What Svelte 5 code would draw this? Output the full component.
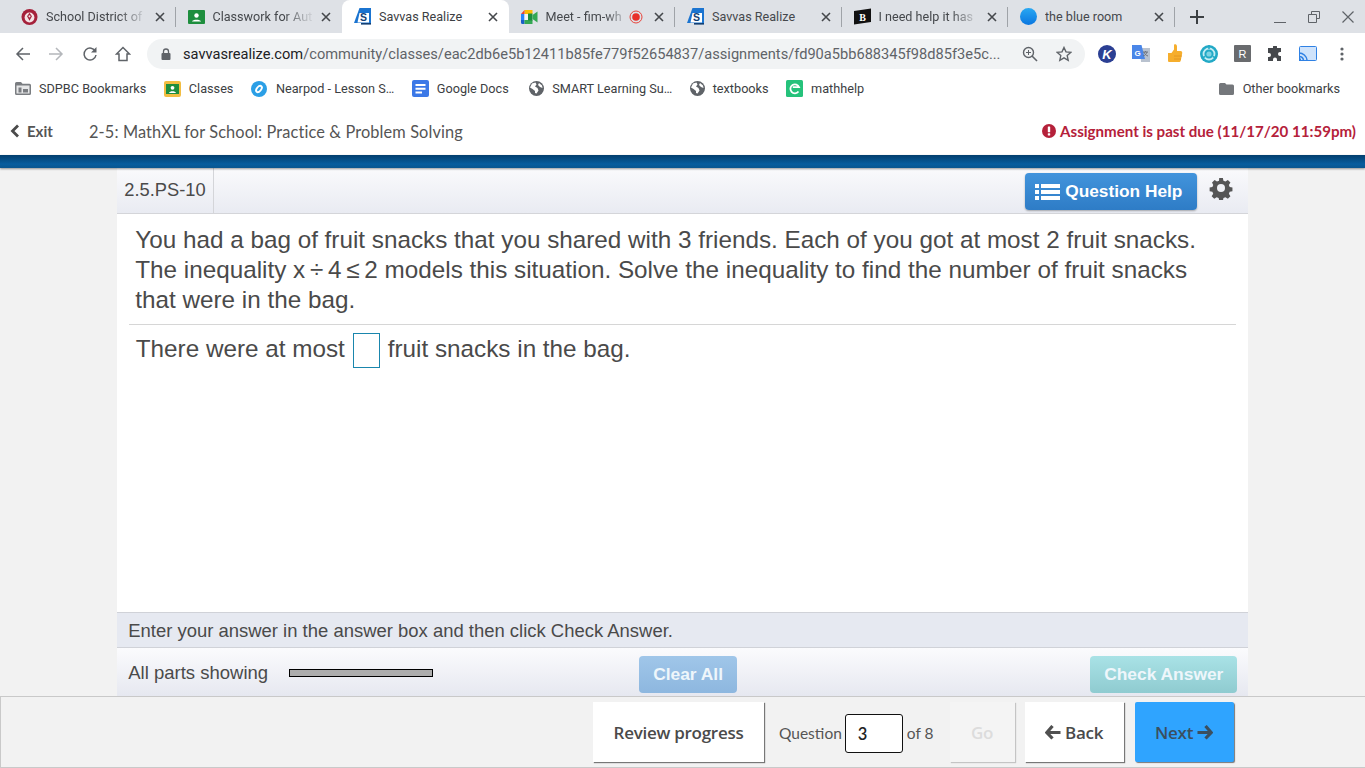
<script>
  const tabs = [
    { title: 'School District of', icon: 'district', fade: true },
    { title: 'Classwork for Aut', icon: 'classroom', fade: true },
    { title: 'Savvas Realize', icon: 'savvas', active: true },
    { title: 'Meet - fim-wh', icon: 'meet', recording: true, fade: true },
    { title: 'Savvas Realize', icon: 'savvas' },
    { title: 'I need help it has', icon: 'brainly', fade: true },
    { title: 'the blue room', icon: 'blue' }
  ];

  const bookmarks = [
    { label: 'SDPBC Bookmarks', icon: 'managed' },
    { label: 'Classes', icon: 'classes' },
    { label: 'Nearpod - Lesson S…', icon: 'nearpod' },
    { label: 'Google Docs', icon: 'docs' },
    { label: 'SMART Learning Su…', icon: 'globe' },
    { label: 'textbooks', icon: 'globe' },
    { label: 'mathhelp', icon: 'mathhelp' }
  ];
</script>

{#snippet favicon(kind)}
  {#if kind === 'district'}
    <svg width="18" height="18" viewBox="0 0 18 18"><circle cx="9" cy="9" r="8.500" fill="#a5213b" /><circle cx="9" cy="9.500" r="5.200" fill="#f4e4e6" /><path d="M9 4.500l2.600 3.600L9 13 6.400 8.100z" fill="#a5213b" /><circle cx="9" cy="8.300" r="1.100" fill="#f4e4e6" /></svg>
  {:else if kind === 'classroom'}
    <svg width="17" height="14" viewBox="0 0 17 14"><rect width="17" height="14" rx="1" fill="#1e8e3e" /><circle cx="8.500" cy="5.500" r="2.200" fill="#fff" /><path d="M4 11.500c.5-2.500 8.500-2.500 9 0z" fill="#fff" /></svg>
  {:else if kind === 'savvas'}
    <svg width="17" height="17" viewBox="0 0 17 17"><path d="M5.500 0H17v15H0z" fill="#1b74d0" /><path d="M5.500 5H15v9.500H3.500z" fill="#fff" /><text x="9.500" y="13" font-size="10.500" font-weight="700" font-family="Liberation Sans" text-anchor="middle" fill="#123f74">S</text><rect x="7" y="15" width="10" height="1.600" fill="#123f74" /></svg>
  {:else if kind === 'meet'}
    <svg width="17" height="14" viewBox="0 0 17 14"><path d="M3.500 0h8v4h-8z" fill="#fbbc04" /><path d="M3.500 0v4H0z" fill="#ea4335" /><path d="M0 4h3.500v6H0z" fill="#2684fc" /><path d="M0 10h3.500v4H1.500A1.500 1.500 0 0 1 0 12.500z" fill="#1a5fc8" /><path d="M3.500 10h8v4h-8z" fill="#34a853" /><path d="M3.500 4h8v6h-8z" fill="#f4f4f4" /><path d="M7 3.500h4.500v7H7z" fill="#1e8e3e" /><path d="M11.500 5l5-3.500v11l-5-3.500z" fill="#34a853" /></svg>
  {:else if kind === 'brainly'}
    <svg width="17" height="17" viewBox="0 0 17 17"><path d="M0 3l17-2.500V14L0 16.500z" fill="#111" /><text x="8.500" y="12.500" font-size="10" font-weight="700" font-family="Liberation Serif" text-anchor="middle" fill="#fff">B</text></svg>
  {:else if kind === 'blue'}
    <svg width="17" height="17" viewBox="0 0 17 17"><defs><linearGradient id="bluefav" x1="0" y1="0" x2="0" y2="1"><stop offset="0" stop-color="#29a8f2" /><stop offset="1" stop-color="#0a76e0" /></linearGradient></defs><circle cx="8.500" cy="8.500" r="8.500" fill="url(#bluefav)" /></svg>
  {/if}
{/snippet}

{#snippet bookmarkIcon(kind)}
  {#if kind === 'managed'}
    <svg width="16" height="13" viewBox="0 0 16 13"><path d="M1.500 0H6l1.500 1.800h7A1.500 1.500 0 0 1 16 3.300V11.500A1.500 1.500 0 0 1 14.500 13h-13A1.500 1.500 0 0 1 0 11.500V1.500A1.500 1.500 0 0 1 1.500 0z" fill="#7a7d81" /><rect x="1.500" y="3.500" width="13" height="8" fill="#e6e7e8" /><rect x="3.500" y="5.500" width="3" height="5" fill="#7a7d81" /><rect x="8" y="7" width="5" height="3.500" fill="#7a7d81" /></svg>
  {:else if kind === 'classes'}
    <svg width="17" height="16" viewBox="0 0 17 16"><rect width="17" height="16" rx="2" fill="#f2bd42" /><rect x="2" y="3" width="13" height="10" fill="#1e8e3e" /><circle cx="8.500" cy="6.800" r="1.900" fill="#fff" /><path d="M5 12c.5-2.300 6.500-2.300 7 0z" fill="#fff" /></svg>
  {:else if kind === 'nearpod'}
    <svg width="16" height="16" viewBox="0 0 16 16"><circle cx="8" cy="8" r="8" fill="#2b9fe6" /><ellipse cx="8" cy="8" rx="3" ry="4.600" transform="rotate(40 8 8)" fill="#fff" /><ellipse cx="8" cy="8" rx="1.300" ry="2.600" transform="rotate(40 8 8)" fill="#2b9fe6" /></svg>
  {:else if kind === 'docs'}
    <svg width="17" height="17" viewBox="0 0 17 17"><rect width="17" height="17" rx="2" fill="#3b78e7" /><path d="M3.500 4h10v2h-10zM3.500 7.700h10v2h-10zM3.500 11.400h6.500v2H3.500z" fill="#fff" /></svg>
  {:else if kind === 'globe'}
    <svg width="15" height="15" viewBox="0 0 15 15"><circle cx="7.500" cy="7.500" r="7.500" fill="#5f6368" /><path d="M3 2.500l3.500-1 1 2-1.500 2 2.500 1.500 1 2.500-2 3-1.500-.5V10L3.500 8 1 6.500zM10 2l3 2.500.5 2.500-2.500-1L9 4z" fill="#fff" /></svg>
  {:else if kind === 'mathhelp'}
    <svg width="17" height="17" viewBox="0 0 17 17"><rect width="17" height="17" rx="1.500" fill="#25c27b" /><path d="M12.500 11.500a4.500 4.500 0 1 1 .6-4.300H6.800" fill="none" stroke="#fff" stroke-width="1.800" /></svg>
  {/if}
{/snippet}

<div class="page">
  <header class="chrome">
    <div class="tabstrip">
      {#each tabs as tab}
        <div class="tab" class:active={tab.active}>
          <span class="favicon">{@render favicon(tab.icon)}</span>
          <span class="tab-title" class:fade={tab.fade}>{tab.title}</span>
          {#if tab.recording}
            <svg class="rec" width="14" height="14" viewBox="0 0 14 14"><circle cx="7" cy="7" r="6" fill="none" stroke="#e8453c" stroke-width="1" /><circle cx="7" cy="7" r="3.800" fill="#e8302a" /></svg>
          {/if}
          <svg class="tab-close" width="10" height="10" viewBox="0 0 10 10"><path d="M1 1l8 8M9 1l-8 8" stroke="#45484c" stroke-width="1.600" /></svg>
        </div>
      {/each}
      <svg class="new-tab" width="14" height="14" viewBox="0 0 14 14"><path d="M7 0v14M0 7h14" stroke="#3c4043" stroke-width="2" /></svg>
      <div class="window-controls">
        <svg width="12" height="12" viewBox="0 0 12 12"><path d="M0 11.500h12" stroke="#5f6368" stroke-width="1" /></svg>
        <svg width="12" height="12" viewBox="0 0 12 12"><path d="M3.500 3V.5h8v7H9M.5 3.500h8v8h-8z" fill="none" stroke="#5f6368" stroke-width="1" /></svg>
        <svg width="12" height="12" viewBox="0 0 12 12"><path d="M.5.500l11 11M11.500.500l-11 11" stroke="#5f6368" stroke-width="1.200" /></svg>
      </div>
    </div>

    <div class="toolbar">
      <svg class="nav" width="16" height="16" viewBox="0 0 16 16"><path d="M15 8H2M8 2L2 8l6 6" fill="none" stroke="#5f6368" stroke-width="1.500" /></svg>
      <svg class="nav" width="16" height="16" viewBox="0 0 16 16"><path d="M1 8h13M8 2l6 6-6 6" fill="none" stroke="#b4b7bb" stroke-width="1.500" /></svg>
      <svg class="nav" width="16" height="16" viewBox="0 0 16 16"><path d="M13.500 5.500A6 6 0 1 0 14 9" fill="none" stroke="#5f6368" stroke-width="1.500" /><path d="M14.500 1v5.500H9z" fill="#5f6368" /></svg>
      <svg class="nav" width="16" height="16" viewBox="0 0 16 16"><path d="M8 1.500L1.500 8H4v6.500h8V8h2.500z" fill="none" stroke="#5f6368" stroke-width="1.500" /></svg>
      <div class="omnibox">
        <svg width="10" height="12" viewBox="0 0 10 12"><path d="M2.500 5V3.500a2.500 2.500 0 0 1 5 0V5" fill="none" stroke="#5f6368" stroke-width="1.300" /><rect x="0.500" y="5" width="9" height="7" rx="1" fill="#5f6368" /></svg>
        <span class="url"><b>savvasrealize.com</b>/community/classes/eac2db6e5b12411b85fe779f52654837/assignments/fd90a5bb688345f98d85f3e5c...</span>
        <svg class="omni-icon" width="16" height="16" viewBox="0 0 16 16"><circle cx="6.500" cy="6.500" r="5" fill="none" stroke="#5f6368" stroke-width="1.400" /><path d="M10 10l5 5" stroke="#5f6368" stroke-width="1.600" /><path d="M4 6.500h5M6.500 4v5" stroke="#5f6368" stroke-width="1" /></svg>
        <svg class="omni-icon" width="16" height="16" viewBox="0 0 16 16"><path d="M8 1.500l2 4.400 4.800.5-3.600 3.200 1 4.700L8 11.900l-4.200 2.400 1-4.700L1.200 6.400 6 5.900z" fill="none" stroke="#5f6368" stroke-width="1.400" /></svg>
      </div>
      <div class="extensions">
        <svg width="18" height="18" viewBox="0 0 18 18"><circle cx="9" cy="9" r="9" fill="#2b3f93" /><text x="9" y="13.500" font-size="13" font-weight="700" font-style="italic" font-family="Liberation Sans" text-anchor="middle" fill="#fff">K</text></svg>
        <svg width="18" height="18" viewBox="0 0 18 18"><path d="M8 3h10v14H9z" fill="#b9c2cf" /><path d="M0 0h9.500l3.500 14H0z" fill="#4a86e8" /><text x="5.500" y="10.500" font-size="8" font-weight="700" font-family="Liberation Sans" text-anchor="middle" fill="#fff">G</text><path d="M11 7h5M13.500 6v1M12 7c.5 2 2 3.500 4 4M15 7c-.5 2-2 3.500-4 4" fill="none" stroke="#6d7480" stroke-width="1" /></svg>
        <svg width="18" height="19" viewBox="0 0 18 19"><path d="M2 9h3.500L8 5.500V1c0-1 3-1.200 3 1.500V7h3.500c1.600 0 2 1.500 1.600 2.800l-1.300 6.700c-.3 1-1 1.500-2 1.500H3.500C2.500 18 2 17.500 2 16.500z" fill="#f6ae2d" /><path d="M8 12h8M8 15h7" stroke="#e09320" stroke-width=".8" /></svg>
        <svg width="18" height="18" viewBox="0 0 18 18"><circle cx="9" cy="9" r="9" fill="#22a9c6" /><circle cx="9" cy="9" r="5.500" fill="none" stroke="#c4edf4" stroke-width="1.800" /><circle cx="9" cy="9" r="2.600" fill="#7fd3e3" /><path d="M9 0v4M1.500 13.500L5 11.500M16.500 13.500L13 11.500" stroke="#22a9c6" stroke-width="1.500" /></svg>
        <svg width="17" height="17" viewBox="0 0 17 17"><rect width="17" height="17" rx="1" fill="#696b6e" /><text x="8.500" y="13" font-size="11" font-family="Liberation Sans" text-anchor="middle" fill="#fff">R</text></svg>
        <svg width="16" height="16" viewBox="0 0 16 16"><path d="M6 1a2 2 0 0 1 4 0v1h4v4h-1a2 2 0 0 0 0 4h1v5H10v-1.500a2 2 0 0 0-4 0V15H1v-4h1a2 2 0 0 0 0-4H1V2h5z" fill="#45484c" /></svg>
        <svg width="18" height="15" viewBox="0 0 18 15"><rect x="0.500" y="0.500" width="17" height="14" rx="1" fill="#cfe3fb" stroke="#2f81e4" /><path d="M0 7a8 8 0 0 1 8 7M0 10.500a4.500 4.500 0 0 1 4.500 3.500" fill="none" stroke="#2f81e4" stroke-width="1.500" /><path d="M0 12.500h2V15H0z" fill="#2f81e4" /></svg>
        <svg class="menu" width="4" height="14" viewBox="0 0 4 14"><circle cx="2" cy="2" r="1.600" fill="#5f6368" /><circle cx="2" cy="7" r="1.600" fill="#5f6368" /><circle cx="2" cy="12" r="1.600" fill="#5f6368" /></svg>
      </div>
    </div>

    <div class="bookmarks">
      {#each bookmarks as mark}
        <span class="bookmark">{@render bookmarkIcon(mark.icon)}<span>{mark.label}</span></span>
      {/each}
      <span class="bookmark other">
        <svg width="15" height="12" viewBox="0 0 15 12"><path d="M1.500 0H6l1.500 1.500h6A1.500 1.500 0 0 1 15 3v7.500a1.500 1.500 0 0 1-1.500 1.500h-12A1.500 1.500 0 0 1 0 10.500v-9A1.500 1.500 0 0 1 1.500 0z" fill="#74777b" /></svg>
        <span>Other bookmarks</span>
      </span>
    </div>
  </header>

  <section class="assignment-bar">
    <a class="exit" href="#exit">
      <svg width="10" height="14" viewBox="0 0 10 14"><path d="M8 1.500L2.500 7 8 12.500" fill="none" stroke="#4a4a4a" stroke-width="2.800" /></svg>
      Exit
    </a>
    <span class="assignment-title">2-5: MathXL for School: Practice &amp; Problem Solving</span>
    <span class="past-due">
      <svg width="14" height="14" viewBox="0 0 14 14"><circle cx="7" cy="7" r="7" fill="#b5213a" /><rect x="5.800" y="2.500" width="2.400" height="5.800" rx=".6" fill="#fff" /><rect x="5.800" y="9.300" width="2.400" height="2.300" rx=".5" fill="#fff" /></svg>
      Assignment is past due (11/17/20 11:59pm)
    </span>
  </section>
  <div class="brand-stripe"></div>

  <main class="stage">
    <div class="player">
      <div class="question-head">
        <div class="question-id">2.5.PS-10</div>
        <button class="help">
          <svg width="25" height="16" viewBox="0 0 25 16"><path d="M0 0h4v4H0zM0 6h4v4H0zM0 12h4v4H0zM6 0h19v4H6zM6 6h19v4H6zM6 12h19v4H6z" fill="#fff" /></svg>
          Question Help
        </button>
        <svg class="gear" width="24" height="24" viewBox="0 0 24 24"><path d="M10 1h4l.6 3 2.200.9 2.600-1.700 2.800 2.800-1.700 2.600.9 2.200 3 .6v4l-3 .6-.9 2.200 1.700 2.600-2.800 2.800-2.600-1.700-2.200.9-.6 3h-4l-.6-3-2.200-.9-2.600 1.700-2.800-2.800 1.700-2.600-.9-2.200-3-.6v-4l3-.6.9-2.200L2.200 6l2.800-2.800 2.600 1.700 2.200-.9z" fill="#555" transform="translate(1 1) scale(.92)" /><circle cx="12" cy="12" r="4" fill="#f0f1f5" /></svg>
      </div>

      <div class="question-body">
        <p class="stem">You had a bag of fruit snacks that you shared with 3 friends. Each of you got at most 2 fruit snacks.<br />The inequality <span class="math">x ÷ 4 ≤ 2</span> models this situation. Solve the inequality to find the number of fruit snacks<br />that were in the bag.</p>
        <hr />
        <p class="answer">There were at most <input class="answer-box" type="text" /> fruit snacks in the bag.</p>
      </div>

      <div class="instruction">Enter your answer in the answer box and then click Check Answer.</div>

      <div class="actions">
        <span class="parts">All parts showing</span>
        <span class="progress"></span>
        <button class="action clear">Clear All</button>
        <button class="action check">Check Answer</button>
      </div>
    </div>
  </main>

  <footer class="pager">
    <button class="pager-btn review">Review progress</button>
    <span class="question-label">Question</span>
    <input class="question-input" type="text" value="3" />
    <span class="of">of 8</span>
    <button class="pager-btn go">Go</button>
    <button class="pager-btn back">
      <svg width="16" height="15" viewBox="0 0 16 15"><path d="M7.500 1L1.800 7.500l5.700 6M2.500 7.500H15.500" fill="none" stroke="#505050" stroke-width="3.200" /></svg>
      Back
    </button>
    <button class="pager-btn next">
      Next
      <svg width="16" height="15" viewBox="0 0 16 15"><path d="M8.500 1l5.700 6.500-5.700 6M13.500 7.500H.5" fill="none" stroke="#3b4f5f" stroke-width="3.200" /></svg>
    </button>
  </footer>
</div>

<style>
  :global(body) {
    margin: 0;
    overflow: hidden;
    background: #f2f2f2;
  }

  .page {
    width: 1365px;
    height: 768px;
    display: flex;
    flex-direction: column;
    overflow: hidden;
    font-family: "Liberation Sans", Arial, sans-serif;
    color: #444;
  }

  .chrome {
    font-family: Roboto, "Liberation Sans", sans-serif;
    background: #fff;
  }

  /* tab strip */
  .tabstrip {
    height: 33px;
    background: #dee1e6;
    display: flex;
    align-items: center;
    padding-left: 9px;
  }

  .tab {
    position: relative;
    width: 166.5px;
    height: 33px;
    box-sizing: border-box;
    display: flex;
    align-items: center;
    padding: 0 11px 0 12px;
    font-size: 12.6px;
    color: #45484c;
  }

  .tab::after {
    content: '';
    position: absolute;
    right: 0;
    top: 7px;
    height: 20px;
    width: 1px;
    background: #9fa3a8;
  }

  .tab.active {
    background: #fff;
    border-radius: 8px 8px 0 0;
    color: #3c4043;
  }

  .tab.active::after,
  .tab:nth-child(2)::after {
    display: none;
  }

  .favicon {
    width: 17px;
    display: flex;
    justify-content: center;
    margin-right: 8px;
    flex: none;
  }

  .tab-title {
    flex: 1;
    white-space: nowrap;
    overflow: hidden;
  }

  .tab-title.fade {
    -webkit-mask-image: linear-gradient(to right, #000 72%, rgba(0, 0, 0, .15) 96%);
    mask-image: linear-gradient(to right, #000 72%, rgba(0, 0, 0, .15) 96%);
  }

  .rec {
    flex: none;
    margin-right: 3px;
  }

  .tab-close {
    flex: none;
    margin-left: 8px;
  }

  .new-tab {
    margin-left: 15px;
    flex: none;
  }

  .window-controls {
    margin-left: auto;
    display: flex;
    gap: 22px;
    padding-right: 11px;
    align-items: center;
  }

  /* toolbar */
  .toolbar {
    height: 39px;
    display: flex;
    align-items: center;
    padding: 2px 0 0 15px;
    box-sizing: border-box;
  }

  .nav {
    margin-right: 17px;
    flex: none;
  }

  .nav:nth-child(3) {
    margin-left: 1px;
  }

  .nav:nth-child(4) {
    margin-right: 16px;
  }

  .omnibox {
    width: 938px;
    height: 30px;
    box-sizing: border-box;
    background: #f1f3f4;
    border-radius: 15px;
    display: flex;
    align-items: center;
    padding: 0 13px;
    font-size: 14.64px;
    flex: none;
  }

  .url {
    margin-left: 12px;
    flex: 1;
    white-space: nowrap;
    overflow: hidden;
    color: #5f6368;
  }

  .omnibox > svg:first-child {
    margin-left: 1px;
  }

  .url b {
    font-weight: 400;
    color: #202124;
  }

  .omni-icon {
    margin-left: 18px;
    flex: none;
  }

  .extensions {
    display: flex;
    align-items: center;
    gap: 16px;
    margin-left: 13px;
  }

  .menu {
    margin-left: 7px;
  }

  /* bookmarks bar */
  .bookmarks {
    height: 33px;
    display: flex;
    align-items: center;
    padding-left: 15px;
    font-size: 12.7px;
    color: #3c4043;
    box-sizing: border-box;
  }

  .bookmark {
    display: flex;
    align-items: center;
    gap: 8px;
    margin-right: 17.5px;
    white-space: nowrap;
  }

  .bookmark:nth-child(3) {
    gap: 9px;
  }

  .bookmark:nth-child(5) {
    margin-left: 3px;
  }

  .other {
    margin-left: auto;
    margin-right: 25px;
    gap: 9px;
  }

  /* assignment header */
  .assignment-bar {
    height: 50px;
    background: #fff;
    display: flex;
    align-items: center;
    font-family: Lato, "Liberation Sans", sans-serif;
    font-size: 16.35px;
    padding: 2px 9px 0 10px;
    box-sizing: border-box;
  }

  .exit {
    display: flex;
    align-items: center;
    gap: 7px;
    font-weight: 700;
    font-size: 15px;
    color: #555;
    text-decoration: none;
    width: 79px;
  }

  .assignment-title {
    color: #555;
    letter-spacing: 0.12px;
  }

  .past-due {
    margin-left: auto;
    display: flex;
    align-items: center;
    gap: 4px;
    color: #b5213a;
    font-weight: 700;
    font-size: 15.1px;
    white-space: nowrap;
  }

  .brand-stripe {
    height: 13px;
    background: linear-gradient(#033f6e, #075d9e 70%, #0a568f);
    box-shadow: 0 1px 2px rgba(0, 0, 0, .4);
    position: relative;
  }

  /* question player */
  .stage {
    flex: 1;
    min-height: 0;
    display: flex;
    justify-content: center;
    padding-left: 0.500px;
  }

  .player {
    width: 1131px;
    background: #fff;
    display: flex;
    flex-direction: column;
  }

  .question-head {
    height: 46px;
    flex: none;
    box-sizing: border-box;
    display: flex;
    align-items: center;
    background: linear-gradient(#fafafc, #e9ebf2);
    border-bottom: 1px solid #d4d5d9;
    padding-right: 15px;
  }

  .question-id {
    height: 100%;
    padding: 0 7px;
    width: 97px;
    box-sizing: border-box;
    border-right: 1px solid #d4d5d9;
    font-size: 18.3px;
    line-height: 43px;
    color: #4a4a4a;
    white-space: nowrap;
  }

  .help {
    margin-left: auto;
    height: 37px;
    width: 172px;
    border: 0;
    border-radius: 4px;
    background: linear-gradient(#4294dc, #2e7cc6);
    box-shadow: 0 1px 2px rgba(0, 0, 0, .3);
    color: #fff;
    font: 700 17.3px "Liberation Sans", sans-serif;
    display: flex;
    align-items: center;
    gap: 5px;
    padding: 1px 0 0 10px;
    margin-top: 1px;
  }

  .gear {
    margin-left: 12px;
    margin-top: -5px;
  }

  .question-body {
    flex: 1;
    padding: 11px 12px 0;
    font-size: 24.27px;
    line-height: 30px;
    color: #4a4a4a;
  }

  .stem {
    margin: 0;
    padding: 0 6px;
    white-space: nowrap;
  }

  .math {
    word-spacing: -2px;
  }

  hr {
    border: 0;
    border-top: 1px solid #d6d6d6;
    margin: 9px 0 0;
  }

  .answer {
    margin: 8px 0 0;
    padding: 0 6.5px;
    white-space: nowrap;
    display: flex;
    align-items: flex-start;
    line-height: 31px;
    gap: 8px;
  }

  .answer-box {
    width: 27px;
    height: 35px;
    box-sizing: border-box;
    border: 1px solid #1a86ad;
    border-radius: 0;
    background: #fff;
    padding: 0;
    margin: 0;
  }

  .instruction {
    height: 36px;
    flex: none;
    box-sizing: border-box;
    background: #e6e9f1;
    border-top: 1px solid #d0d2d8;
    border-bottom: 1px solid #d0d2d8;
    padding-left: 11px;
    font-size: 18.47px;
    line-height: 36px;
    color: #4a4a4a;
  }

  .actions {
    height: 48px;
    flex: none;
    box-sizing: border-box;
    display: flex;
    align-items: center;
    padding: 0 11px;
    background: linear-gradient(#fbfbfd, #e6e8f0);
    font-size: 18.5px;
    color: #4a4a4a;
  }

  .parts {
    margin-top: 2px;
  }

  .progress {
    width: 142px;
    height: 6px;
    border: 1px solid #000;
    background: #adadad;
    margin: 2px 0 0 21px;
  }

  .action {
    height: 37px;
    border: 0;
    border-radius: 4px;
    color: #eef6fb;
    font: 700 17.4px "Liberation Sans", sans-serif;
    padding: 0;
    margin-top: 4px;
  }

  .clear {
    width: 98px;
    margin-left: 206px;
    background: linear-gradient(#a0c6e9, #8db7df);
  }

  .check {
    width: 147px;
    margin-left: auto;
    background: linear-gradient(#a9e2e6, #8fcbd0);
  }

  /* bottom pager */
  .pager {
    height: 72px;
    flex: none;
    box-sizing: border-box;
    display: flex;
    align-items: flex-start;
    background: #f2f2f2;
    border: 1px solid #c9c9c9;
    border-width: 1px 0 1px 1px;
    padding: 5px 0 0 592px;
    font-family: Lato, "Liberation Sans", sans-serif;
    font-size: 15.5px;
    color: #555;
  }

  .pager-btn {
    height: 60px;
    border: 0;
    border-radius: 0;
    background: #fff;
    box-shadow: 1px 1px 1px #777;
    font: 600 17px "Open Sans", sans-serif;
    letter-spacing: -0.27px;
    color: #4a4a4a;
    padding: 0;
    display: flex;
    align-items: center;
    justify-content: center;
    gap: 4px;
  }

  .review {
    width: 171px;
  }

  .question-label {
    margin-left: 15px;
    line-height: 62px;
  }

  .question-input {
    width: 58px;
    height: 39px;
    box-sizing: border-box;
    margin: 12px 0 0 3px;
    border: 1px solid #111;
    border-radius: 3px;
    background: #fff;
    padding: 0 0 0 12px;
    font: 600 16.500px Lato, sans-serif;
    color: #222;
  }

  .of {
    margin-left: 4px;
    line-height: 62px;
  }

  .go {
    width: 65px;
    margin-left: 16px;
    background: #f4f4f4;
    color: #dcdcdc;
    box-shadow: 1px 1px 1px #c4c4c4;
  }

  .back {
    width: 99px;
    margin-left: 10px;
  }

  .next {
    width: 99px;
    margin-left: 11px;
    background: #2fa4ff;
    color: #3b4f5f;
    border-radius: 2px;
  }
</style>
